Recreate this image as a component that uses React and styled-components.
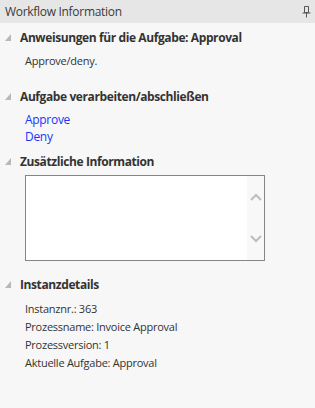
import React from "react";
import styled, { createGlobalStyle } from "styled-components";

const Global = createGlobalStyle`
  html, body { margin: 0; padding: 0; background: #f7f7f7; }
  * { box-sizing: border-box; }
`;

const Panel = styled.div`
  width: 315px;
  height: 408px;
  background: #f7f7f7;
  font-family: "Open Sans", "Noto Sans", sans-serif;
  color: #333;
  overflow: hidden;
`;

const TitleBar = styled.div`
  height: 23px;
  background: #e6e6e6;
  display: flex;
  align-items: center;
  justify-content: space-between;
  padding: 0 4px 0 5px;
  font-size: 12px;
  letter-spacing: -0.3px;
  color: #3a3a3a;
`;

const Section = styled.div`
  margin-top: ${(p) => p.$top}px;
`;

const SectionHeader = styled.div`
  height: 18px;
  display: flex;
  align-items: center;
  gap: 9px;
  padding-left: 5px;
  font-size: 12px;
  font-weight: 700;
  letter-spacing: -0.4px;
  color: #333;
`;

const Body = styled.div`
  padding: ${(p) => p.$pt}px 0 0 25px;
  font-size: 11px;
  letter-spacing: -0.25px;
  line-height: ${(p) => p.$lh}px;
  color: #333;
`;

const Line = styled.div``;

const Link = styled.a`
  display: block;
  color: #1436ff;
  text-decoration: none;
  font-size: 12px;
  letter-spacing: -0.3px;
  line-height: 17px;
  cursor: pointer;
`;

const TextBox = styled.div`
  margin: 5px 0 0 25px;
  width: 240px;
  height: 86px;
  border: 1px solid #858585;
  background: #fff;
  display: flex;
  justify-content: flex-end;
`;

const ScrollBar = styled.div`
  width: 17px;
  background: #f8f8f8;
  display: flex;
  flex-direction: column;
  align-items: center;
  justify-content: space-between;
  padding: 17px 0 17px;
`;

const Triangle = () => (
  <svg width="6" height="7" viewBox="0 0 6 7">
    <polygon points="6,0 6,7 0,7" fill="#b8b8b8" />
  </svg>
);

const Pin = () => (
  <svg width="9" height="13" viewBox="0 0 9 13">
    <path d="M2.5 1.5 H6.5 V7.5 H2.5 Z" fill="none" stroke="#555" strokeWidth="1" />
    <path d="M0.5 8 H8.5" stroke="#555" strokeWidth="1" />
    <path d="M4.5 8 V12.5" stroke="#555" strokeWidth="1" />
  </svg>
);

const Chevron = ({ up }) => (
  <svg width="12" height="8" viewBox="0 0 12 8">
    <path
      d={up ? "M1 7 L6 2 L11 7" : "M1 1 L6 6 L11 1"}
      fill="none"
      stroke="#bdbdbd"
      strokeWidth="2"
    />
  </svg>
);

export default function App() {
  return (
    <Panel>
      <Global />
      <TitleBar>
        <span>Workflow Information</span>
        <Pin />
      </TitleBar>

      <Section $top={5}>
        <SectionHeader>
          <Triangle />
          Anweisungen für die Aufgabe: Approval
        </SectionHeader>
        <Body $pt={6} $lh={17}>
          <Line>Approve/deny.</Line>
        </Body>
      </Section>

      <Section $top={18}>
        <SectionHeader>
          <Triangle />
          Aufgabe verarbeiten/abschließen
        </SectionHeader>
        <Body $pt={6} $lh={17}>
          <Link>Approve</Link>
          <Link>Deny</Link>
        </Body>
      </Section>

      <Section $top={7}>
        <SectionHeader>
          <Triangle />
          Zusätzliche Information
        </SectionHeader>
        <TextBox>
          <ScrollBar>
            <Chevron up />
            <Chevron />
          </ScrollBar>
        </TextBox>
      </Section>

      <Section $top={14}>
        <SectionHeader>
          <Triangle />
          Instanzdetails
        </SectionHeader>
        <Body $pt={7} $lh={18}>
          <Line>Instanznr.: 363</Line>
          <Line>Prozessname: Invoice Approval</Line>
          <Line>Prozessversion: 1</Line>
          <Line>Aktuelle Aufgabe: Approval</Line>
        </Body>
      </Section>
    </Panel>
  );
}
